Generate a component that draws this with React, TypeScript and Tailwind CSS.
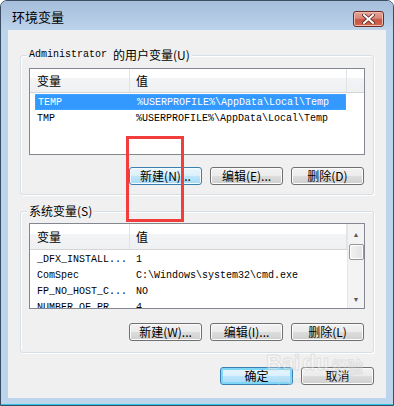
import React from 'react';

const cjk = "font-['Noto_Sans_CJK_SC',sans-serif]";
const mono = "font-['Liberation_Mono','Noto_Sans_CJK_SC',monospace]";

type BtnKind = 'normal' | 'hot' | 'default';

const WinButton: React.FC<{ label: string; kind?: BtnKind }> = ({ label, kind = 'normal' }) => {
  const skin =
    kind === 'hot'
      ? 'border-[#3c7fb1] bg-[linear-gradient(to_bottom,#eaf6fd_0%,#d9f0fc_50%,#bee6fd_50%,#a7d9f5_100%)] shadow-[inset_0_0_0_1px_#f4fbfe]'
      : kind === 'default'
        ? 'border-[#3c7fb1] bg-[linear-gradient(to_bottom,#eaf6fd_0%,#d9f0fc_50%,#bee6fd_50%,#a7d9f5_100%)] shadow-[inset_0_0_0_2px_#7fd6f7]'
        : 'border-[#707070] bg-[linear-gradient(to_bottom,#f2f2f2_0%,#ebebeb_50%,#dddddd_50%,#cfcfcf_100%)] shadow-[inset_0_0_0_1px_#fcfcfc]';
  return (
    <button
      className={`flex h-[18px] w-[73px] items-center justify-center rounded-[3px] border text-[12px] leading-none text-black ${cjk} ${skin}`}
    >
      {label}
    </button>
  );
};

type Row = { name: string; value: string; selected?: boolean };

const ListBox: React.FC<{ rows: Row[]; height: string; headerH: string; scroll?: boolean }> = ({ rows, height, headerH, scroll }) => (
  <div className={`flex w-full overflow-hidden border border-[#828790] bg-white ${height}`}>
    <div className="flex min-w-0 flex-1 flex-col">
      {/* column header */}
      <div className={`flex shrink-0 border-b border-[#d5d5d5] bg-[linear-gradient(to_bottom,#ffffff_0%,#ffffff_40%,#f3f4f6_40%,#eff0f2_100%)] ${headerH}`}>
        <div className={`flex w-[99px] items-center pl-[7px] text-[12px] text-black ${cjk}`}>变量</div>
        <div className="w-px bg-[#e0e3e8]" />
        <div className={`flex w-[216px] items-center pl-[6px] text-[12px] text-black ${cjk}`}>值</div>
        <div className="w-px bg-[#e0e3e8]" />
        <div className="flex-1" />
      </div>
      <div className="flex flex-col pt-[1px]">
        {rows.map((r) => (
          <div
            key={r.name}
            className={`ml-[5px] flex h-[16px] w-[311px] items-center text-[10px] ${mono} ${
              r.selected ? 'border border-dotted border-[#e08a2c] bg-[#3399ff] text-white' : 'text-black'
            }`}
          >
            <div className="w-[95px] whitespace-nowrap pl-[2px]">{r.name}</div>
            <div className="whitespace-nowrap pl-[6px]">{r.value}</div>
          </div>
        ))}
      </div>
    </div>
    {scroll && (
      <div className="flex w-[17px] shrink-0 flex-col items-center border-l border-[#e6e6e6] bg-[#f3f3f3]">
        <div className="flex h-[20px] items-center justify-center text-[7px] leading-none text-[#5a5a5a]">▲</div>
        <div className="h-[16px] w-[15px] rounded-[2px] border border-[#959595] bg-[linear-gradient(to_right,#f3f3f3,#e2e2e2)] shadow-[inset_0_0_0_1px_#ffffff]" />
        <div className="flex-1" />
        <div className="flex h-[18px] items-center justify-center text-[7px] leading-none text-[#5a5a5a]">▼</div>
      </div>
    )}
  </div>
);

const GroupBox: React.FC<{ label: React.ReactNode; className: string; children: React.ReactNode }> = ({ label, className, children }) => (
  <div className={`relative flex flex-col rounded-[3px] border border-[#d5dfe5] shadow-[inset_1px_1px_0_#ffffff,1px_1px_0_#ffffff] ${className}`}>
    <div className="absolute -top-[9px] left-[6px] flex items-center bg-[#f0f0f0] px-[2px] leading-[16px] text-black">{label}</div>
    {children}
  </div>
);

const userRows: Row[] = [
  { name: 'TEMP', value: '%USERPROFILE%\\AppData\\Local\\Temp', selected: true },
  { name: 'TMP', value: '%USERPROFILE%\\AppData\\Local\\Temp' },
];

const sysRows: Row[] = [
  { name: '_DFX_INSTALL...', value: '1' },
  { name: 'ComSpec', value: 'C:\\Windows\\system32\\cmd.exe' },
  { name: 'FP_NO_HOST_C...', value: 'NO' },
  { name: 'NUMBER_OF_PR...', value: '4' },
];

export default function App() {
  return (
    <div className="relative h-[406px] w-[394px] overflow-hidden bg-white">
      <div className="flex h-full w-full flex-col rounded-t-[7px] border border-[#3b4d62] bg-[#bcd4ec]">
        {/* title bar */}
        <div className="flex h-[29px] shrink-0 items-start justify-between rounded-t-[6px] bg-[linear-gradient(to_bottom,#a6bedb,#b3cae4_60%,#bcd4ec)] pl-[11px] pr-[9px]">
          <span className={`mt-[8px] text-[13px] leading-[16px] text-black ${cjk}`}>环境变量</span>
          <div className="mt-[10px] flex h-[16px] w-[31px] items-center justify-center rounded-[3px] border border-[#6e2c2a] bg-[linear-gradient(to_bottom,#e8a597_0%,#d88676_45%,#c65444_55%,#cf6a4f_100%)] shadow-[inset_0_0_0_1px_#f0b9ad]">
            <svg width="13" height="10" viewBox="0 0 13 10">
              <path d="M2 1 L11 9 M11 1 L2 9" stroke="#5b2a28" strokeWidth="3.6" strokeLinecap="square" />
              <path d="M2 1 L11 9 M11 1 L2 9" stroke="#ffffff" strokeWidth="2" strokeLinecap="square" />
            </svg>
          </div>
        </div>

        {/* client area */}
        <div className="mx-[7px] flex h-[368px] shrink-0 flex-col bg-[#f0f0f0] px-[12px]">
          <GroupBox
            className="mt-[25px] h-[140px] px-[8px] pt-[12px]"
            label={
              <>
                <span className={`text-[10px] ${mono}`}>Administrator&nbsp;</span>
                <span className={`text-[12px] ${cjk}`}>的用户变量(U)</span>
              </>
            }
          >
            <ListBox rows={userRows} height="h-[87px]" headerH="h-[24px]" />
            <div className="mt-[12px] flex justify-end gap-[8px] pr-[1px]">
              <WinButton label="新建(N)..." kind="hot" />
              <WinButton label="编辑(E)..." />
              <WinButton label="删除(D)" />
            </div>
          </GroupBox>

          <GroupBox
            className="mt-[16px] h-[142px] px-[8px] pt-[11px]"
            label={<span className={`text-[12px] ${cjk}`}>系统变量(S)</span>}
          >
            <ListBox rows={sysRows} height="h-[86px]" headerH="h-[26px]" scroll />
            <div className="mt-[14px] flex justify-end gap-[8px] pr-[1px]">
              <WinButton label="新建(W)..." />
              <WinButton label="编辑(I)..." />
              <WinButton label="删除(L)" />
            </div>
          </GroupBox>

          <div className="mt-[14px] flex justify-end gap-[8px]">
            <WinButton label="确定" kind="default" />
            <WinButton label="取消" />
          </div>
        </div>

        {/* bottom frame */}
        <div className="flex-1 border-b border-[#2dc6de]" />
      </div>

      {/* red annotation box */}
      <div className="absolute left-[126px] top-[136px] h-[86px] w-[58px] border-[3px] border-[#f23d3d]" />

      {/* watermark */}
      <div className="pointer-events-none absolute left-[266px] top-[352px] flex flex-col items-center opacity-40">
        <div className="flex items-end gap-[2px]">
          <span className="text-[22px] font-bold leading-none text-white [font-family:'Liberation_Sans',sans-serif] [-webkit-text-stroke:1px_#c9c9c9]">Bai</span>
          <span className="text-[22px] font-bold leading-none text-white [font-family:'Liberation_Sans',sans-serif] [-webkit-text-stroke:1px_#c9c9c9]">du</span>
          <span className={`text-[16px] font-bold leading-none text-white [-webkit-text-stroke:1px_#c9c9c9] ${cjk}`}>经验</span>
        </div>
        <span className="mt-[2px] text-[9px] leading-none text-[#d6d6d6] [font-family:'Liberation_Sans',sans-serif]">jingyan.baidu.com</span>
      </div>
    </div>
  );
}
